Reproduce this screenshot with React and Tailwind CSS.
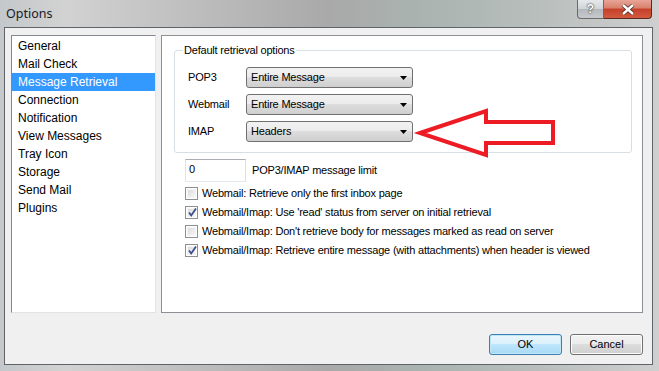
import React from "react";

const listItems = [
  "General",
  "Mail Check",
  "Message Retrieval",
  "Connection",
  "Notification",
  "View Messages",
  "Tray Icon",
  "Storage",
  "Send Mail",
  "Plugins",
];

function Select({ value }) {
  return (
    <div className="relative w-[167px] h-[21px] rounded-[3px] border border-[#707070] bg-[linear-gradient(to_bottom,#f2f2f2_0%,#ebebeb_50%,#dddddd_50%,#cfcfcf_100%)] flex items-center pl-[4px] text-[11px] text-black">
      <span>{value}</span>
      <svg className="absolute right-[5px] top-[8px]" width="7" height="4" viewBox="0 0 7 4">
        <polygon points="0,0 7,0 3.5,4" fill="#000" />
      </svg>
    </div>
  );
}

function Checkbox({ checked }) {
  return (
    <div className="w-[13px] h-[13px] border border-[#8e8f8f] bg-white p-[1px] shrink-0">
      <div className="w-full h-full bg-[linear-gradient(135deg,#dcdcdc,#f7f7f7)] border border-[#f4f4f4] relative">
        {checked && (
          <svg className="absolute left-[-1px] top-[-2px]" width="11" height="11" viewBox="0 0 11 11">
            <path d="M2 5.5 L4.2 8.5 L9 1.5" stroke="#3d4f8c" strokeWidth="1.8" fill="none" />
          </svg>
        )}
      </div>
    </div>
  );
}

function CheckRow({ checked, label }) {
  return (
    <div className="flex items-center gap-[4px] h-[13px]">
      <Checkbox checked={checked} />
      <span className="text-[11px] text-black leading-none">{label}</span>
    </div>
  );
}

export default function App() {
  return (
    <div
      className="relative w-[659px] h-[371px] flex flex-col overflow-hidden bg-[linear-gradient(to_right,#c4c8ca_0%,#d2d2d2_10%,#bdbdbd_30%,#a9a9a9_50%,#aab4b1_65%,#b7bdbb_80%,#cfcfcf_100%)]"
      style={{ fontFamily: '"Liberation Sans", Arial, sans-serif' }}
    >
      {/* Title bar */}
      <div className="h-[27px] flex items-start justify-between shrink-0">
        <div className="pl-[6px] pt-[5px] text-[12.5px] text-[#1a1a2a]" style={{ fontFamily: '"Noto Sans", sans-serif' }}>
          Options
        </div>
        <div className="flex mr-[7px]">
          <div className="w-[27px] h-[19px] rounded-bl-[4px] border border-t-0 border-[#6b6b6b] bg-[linear-gradient(to_bottom,#e6e9ec_0%,#cfd3d7_50%,#b3b8bd_50%,#c6cacf_100%)] flex items-center justify-center text-[12px] font-bold text-white" style={{ textShadow: "0 0 2px #333, 0 0 1px #333" }}>
            ?
          </div>
          <div className="w-[48px] h-[19px] rounded-br-[4px] border border-t-0 border-l-0 border-[#5a2a22] bg-[linear-gradient(to_bottom,#e8a597_0%,#d7806c_45%,#c5402a_50%,#d25a3f_100%)] flex items-center justify-center">
            <svg width="14" height="11" viewBox="0 0 14 11">
              <path d="M2 1 L12 10 M12 1 L2 10" stroke="#4a2a25" strokeWidth="4" />
              <path d="M2 1 L12 10 M12 1 L2 10" stroke="#fff" strokeWidth="2.4" />
            </svg>
          </div>
        </div>
      </div>

      {/* Client area */}
      <div className="ml-[4px] mr-[6px] h-[338px] border border-[#5f6468] bg-[#f0f0f0] flex flex-col pl-[6px] pt-[7px] pr-[9px]">
        <div className="flex gap-[5px] h-[278px]">
          {/* Left list */}
          <div className="w-[145px] h-full bg-white border border-[#828790] border-r-[#e3e3e3] border-b-[#e3e3e3] pt-[1px] text-[12px]" >
            {listItems.map((it) => (
              <div
                key={it}
                className={
                  "h-[18px] flex items-center pl-[6px] " +
                  (it === "Message Retrieval" ? "bg-[#3399ff] text-white" : "text-black")
                }
              >
                {it}
              </div>
            ))}
          </div>

          {/* Right panel */}
          <div className="flex-1 h-full bg-white border border-[#8c8f94] pl-[12px] pr-[10px] pt-[14px] tracking-[-0.2px]">
            {/* Group box */}
            <div className="relative h-[103px] border border-[#d5dfe5] rounded-[3px] pl-[13px] pt-[16px]">
              <div className="absolute left-[8px] top-[-8px] bg-white px-[1px] text-[11px] text-black leading-[14px]">
                Default retrieval options
              </div>
              <div className="flex flex-col gap-[6px] text-[11px] text-black">
                <div className="flex items-center">
                  <span className="w-[58px]">POP3</span>
                  <Select value="Entire Message" />
                </div>
                <div className="flex items-center">
                  <span className="w-[58px]">Webmail</span>
                  <Select value="Entire Message" />
                </div>
                <div className="flex items-center">
                  <span className="w-[58px]">IMAP</span>
                  <Select value="Headers" />
                </div>
              </div>
            </div>

            {/* Limit */}
            <div className="flex items-center mt-[6px] ml-[11px]">
              <div className="w-[61px] h-[23px] border border-[#abadb3] border-r-[#dbdfe6] border-b-[#e3e9ef] border-l-[#e2e3ea] bg-white pl-[3px] pt-[3px] text-[11px] text-black leading-[13px]">
                0
              </div>
              <span className="ml-[6px] text-[11px] text-black">POP3/IMAP message limit</span>
            </div>

            {/* Checkboxes */}
            <div className="flex flex-col gap-[6px] mt-[5px] ml-[11px]">
              <CheckRow checked={false} label="Webmail: Retrieve only the first inbox page" />
              <CheckRow checked={true} label="Webmail/Imap: Use 'read' status from server on initial retrieval" />
              <CheckRow checked={false} label="Webmail/Imap: Don't retrieve body for messages marked as read on server" />
              <CheckRow checked={true} label="Webmail/Imap: Retrieve entire message (with attachments) when header is viewed" />
            </div>
          </div>
        </div>

        {/* Buttons */}
        <div className="flex justify-end gap-[8px] mt-[21px]">
          <button className="w-[73px] h-[21px] rounded-[3px] border border-[#3c7fb1] bg-[linear-gradient(to_bottom,#eaf6fd_0%,#d9f0fc_50%,#bee6fd_50%,#a7d9f5_100%)] shadow-[inset_0_0_0_1px_#bfe6f9] text-[11px] text-black">
            OK
          </button>
          <button className="w-[73px] h-[21px] rounded-[3px] border border-[#707070] bg-[linear-gradient(to_bottom,#f2f2f2_0%,#ebebeb_50%,#dddddd_50%,#cfcfcf_100%)] shadow-[inset_0_0_0_1px_#fcfcfc] text-[11px] text-black">
            Cancel
          </button>
        </div>
      </div>

      {/* Red annotation arrow */}
      <svg className="absolute left-0 top-0 pointer-events-none" width="659" height="371" viewBox="0 0 659 371">
        <polygon
          points="420,133 486,111 486,122 553,122 553,143 486,143 486,155"
          fill="none"
          stroke="#ed1c24"
          strokeWidth="4"
          strokeLinejoin="miter"
        />
      </svg>
    </div>
  );
}
